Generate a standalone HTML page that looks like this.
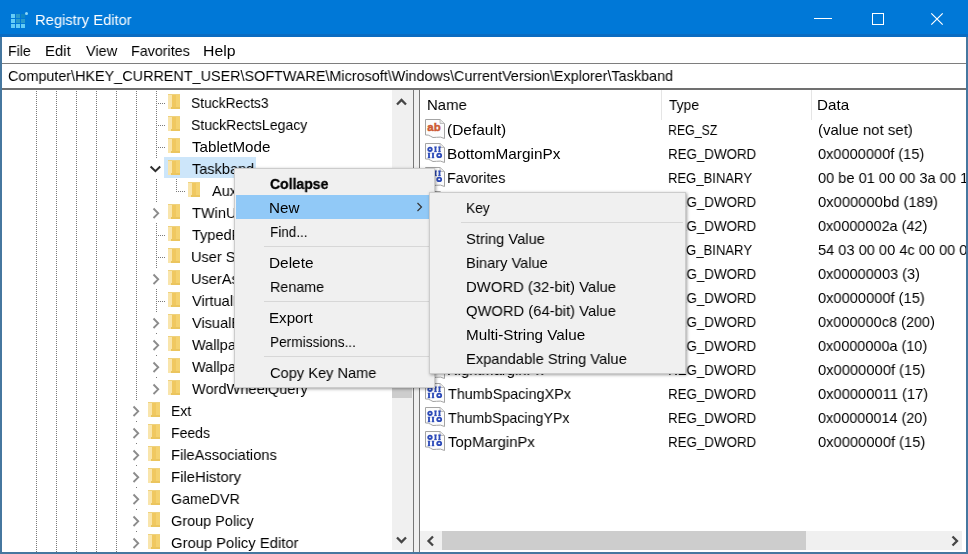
<!DOCTYPE html>
<html><head><meta charset="utf-8"><style>
html,body{margin:0;padding:0}
body{width:968px;height:554px;overflow:hidden;position:relative;background:#fff;font-family:"Liberation Sans",sans-serif;font-size:14px;color:#000}
.t{position:absolute;white-space:nowrap;transform-origin:0 0;will-change:transform}
.r{position:absolute}
svg.r{overflow:visible}
</style></head><body>
<div class="r" style="left:0px;top:0px;width:968px;height:37px;background:#0078D7;"></div><div class="r" style="left:0px;top:34px;width:968px;height:3px;background:#0A6CC2;"></div><div class="r" style="left:11px;top:14px;width:4px;height:4px;background:#64CCF6;"></div><div class="r" style="left:16px;top:14px;width:4px;height:4px;background:#2A9ACB;"></div><div class="r" style="left:21px;top:14px;width:4px;height:4px;background:#0F86C6;"></div><div class="r" style="left:11px;top:19px;width:4px;height:4px;background:#64CCF6;"></div><div class="r" style="left:16px;top:19px;width:4px;height:4px;background:#2A9ACB;"></div><div class="r" style="left:21px;top:19px;width:4px;height:4px;background:#2A9ACB;"></div><div class="r" style="left:11px;top:24px;width:4px;height:4px;background:#64CCF6;"></div><div class="r" style="left:16px;top:24px;width:4px;height:4px;background:#64CCF6;"></div><div class="r" style="left:21px;top:24px;width:4px;height:4px;background:#64CCF6;"></div><div class="r" style="left:25px;top:12px;width:3px;height:3px;background:#8ED8F8;border-radius:50%"></div><div class="t" style="left:34.72px;top:12.10px;font-size:15px;line-height:15px;transform:scaleX(0.9835);color:#fff">Registry Editor</div><div class="r" style="left:814px;top:18px;width:18px;height:1px;background:#fff;"></div><div class="r" style="left:872px;top:13px;width:10px;height:10px;border:1px solid #fff"></div><svg class="r" style="left:931px;top:13px" width="12" height="12"><path d="M0.3 0.3 L11.7 11.7 M11.7 0.3 L0.3 11.7" stroke="#fff" stroke-width="1.2"/></svg><div class="r" style="left:0px;top:37px;width:968px;height:26px;background:#fff;"></div><div class="t" style="left:7.66px;top:42.60px;font-size:15px;line-height:15px;transform:scaleX(0.9435);">File</div><div class="t" style="left:45.01px;top:42.60px;font-size:15px;line-height:15px;transform:scaleX(0.9920);">Edit</div><div class="t" style="left:85.80px;top:42.60px;font-size:15px;line-height:15px;transform:scaleX(0.9656);">View</div><div class="t" style="left:130.65px;top:42.60px;font-size:15px;line-height:15px;transform:scaleX(0.9533);">Favorites</div><div class="t" style="left:202.95px;top:42.60px;font-size:15px;line-height:15px;transform:scaleX(1.0517);">Help</div><div class="r" style="left:0px;top:63px;width:968px;height:1px;background:#7E7E7E;"></div><div class="r" style="left:0px;top:64px;width:968px;height:24px;background:#fff;"></div><div class="t" style="left:7.54px;top:67.90px;font-size:15px;line-height:15px;transform:scaleX(0.9585);">Computer\HKEY_CURRENT_USER\SOFTWARE\Microsoft\Windows\CurrentVersion\Explorer\Taskband</div><div class="r" style="left:0px;top:88px;width:968px;height:2px;background:#707070;"></div><div class="r" style="left:36px;top:91px;width:1px;height:461px;background:repeating-linear-gradient(to bottom,#7A7A7A 0 1px,transparent 1px 2px)"></div><div class="r" style="left:56px;top:91px;width:1px;height:461px;background:repeating-linear-gradient(to bottom,#7A7A7A 0 1px,transparent 1px 2px)"></div><div class="r" style="left:76px;top:91px;width:1px;height:461px;background:repeating-linear-gradient(to bottom,#7A7A7A 0 1px,transparent 1px 2px)"></div><div class="r" style="left:96px;top:91px;width:1px;height:461px;background:repeating-linear-gradient(to bottom,#7A7A7A 0 1px,transparent 1px 2px)"></div><div class="r" style="left:116px;top:91px;width:1px;height:461px;background:repeating-linear-gradient(to bottom,#7A7A7A 0 1px,transparent 1px 2px)"></div><div class="r" style="left:136px;top:91px;width:1px;height:461px;background:repeating-linear-gradient(to bottom,#7A7A7A 0 1px,transparent 1px 2px)"></div><div class="r" style="left:156px;top:91px;width:1px;height:298px;background:repeating-linear-gradient(to bottom,#7A7A7A 0 1px,transparent 1px 2px)"></div><div class="r" style="left:164px;top:157px;width:92px;height:21px;background:#CDE6FA;"></div><div class="r" style="left:156px;top:103px;width:10px;height:1px;background:repeating-linear-gradient(to right,#7A7A7A 0 1px,transparent 1px 2px)"></div><svg class="r" style="left:168px;top:94px" width="12" height="15" viewBox="0 0 12 15"><rect x="0" y="0" width="12" height="15" fill="#F5D880"/><rect x="0" y="1" width="4" height="14" fill="#F9E5AC"/><rect x="4" y="1" width="4" height="13" fill="#F0C860"/><rect x="8" y="1" width="4" height="13" fill="#F4D270"/><rect x="0" y="0" width="12" height="1" fill="#EFD27E"/><rect x="3" y="13" width="9" height="2" fill="#EBC55E"/></svg><div class="t" style="left:190.58px;top:94.90px;font-size:15px;line-height:15px;transform:scaleX(0.9217);">StuckRects3</div><div class="r" style="left:156px;top:125px;width:10px;height:1px;background:repeating-linear-gradient(to right,#7A7A7A 0 1px,transparent 1px 2px)"></div><svg class="r" style="left:168px;top:116px" width="12" height="15" viewBox="0 0 12 15"><rect x="0" y="0" width="12" height="15" fill="#F5D880"/><rect x="0" y="1" width="4" height="14" fill="#F9E5AC"/><rect x="4" y="1" width="4" height="13" fill="#F0C860"/><rect x="8" y="1" width="4" height="13" fill="#F4D270"/><rect x="0" y="0" width="12" height="1" fill="#EFD27E"/><rect x="3" y="13" width="9" height="2" fill="#EBC55E"/></svg><div class="t" style="left:190.56px;top:116.90px;font-size:15px;line-height:15px;transform:scaleX(0.9358);">StuckRectsLegacy</div><div class="r" style="left:156px;top:147px;width:10px;height:1px;background:repeating-linear-gradient(to right,#7A7A7A 0 1px,transparent 1px 2px)"></div><svg class="r" style="left:168px;top:138px" width="12" height="15" viewBox="0 0 12 15"><rect x="0" y="0" width="12" height="15" fill="#F5D880"/><rect x="0" y="1" width="4" height="14" fill="#F9E5AC"/><rect x="4" y="1" width="4" height="13" fill="#F0C860"/><rect x="8" y="1" width="4" height="13" fill="#F4D270"/><rect x="0" y="0" width="12" height="1" fill="#EFD27E"/><rect x="3" y="13" width="9" height="2" fill="#EBC55E"/></svg><div class="t" style="left:191.50px;top:138.90px;font-size:15px;line-height:15px;transform:scaleX(1.0104);">TabletMode</div><div class="r" style="left:151px;top:158px;width:10px;height:21px;background:#fff;"></div><svg class="r" style="left:150px;top:164px" width="12" height="9"><path d="M0.6 2.5 L5.4 7.2 L10.2 2.5" fill="none" stroke="#2E2E2E" stroke-width="2"/></svg><svg class="r" style="left:168px;top:160px" width="12" height="15" viewBox="0 0 12 15"><rect x="0" y="0" width="12" height="15" fill="#F5D880"/><rect x="0" y="1" width="4" height="14" fill="#F9E5AC"/><rect x="4" y="1" width="4" height="13" fill="#F0C860"/><rect x="8" y="1" width="4" height="13" fill="#F4D270"/><rect x="0" y="0" width="12" height="1" fill="#EFD27E"/><rect x="3" y="13" width="9" height="2" fill="#EBC55E"/></svg><div class="t" style="left:191.50px;top:160.90px;font-size:15px;line-height:15px;transform:scaleX(0.9700);">Taskband</div><div class="r" style="left:176px;top:191px;width:10px;height:1px;background:repeating-linear-gradient(to right,#7A7A7A 0 1px,transparent 1px 2px)"></div><div class="r" style="left:176px;top:179px;width:1px;height:12px;background:repeating-linear-gradient(to bottom,#7A7A7A 0 1px,transparent 1px 2px)"></div><div class="r" style="left:176px;top:191px;width:10px;height:1px;background:repeating-linear-gradient(to right,#7A7A7A 0 1px,transparent 1px 2px)"></div><svg class="r" style="left:188px;top:182px" width="12" height="15" viewBox="0 0 12 15"><rect x="0" y="0" width="12" height="15" fill="#F5D880"/><rect x="0" y="1" width="4" height="14" fill="#F9E5AC"/><rect x="4" y="1" width="4" height="13" fill="#F0C860"/><rect x="8" y="1" width="4" height="13" fill="#F4D270"/><rect x="0" y="0" width="12" height="1" fill="#EFD27E"/><rect x="3" y="13" width="9" height="2" fill="#EBC55E"/></svg><div class="t" style="left:211.50px;top:182.90px;font-size:15px;line-height:15px;transform:scaleX(0.9700);">AuxilliaryPins</div><div class="r" style="left:151px;top:202px;width:10px;height:21px;background:#fff;"></div><svg class="r" style="left:152px;top:206px" width="8" height="14"><path d="M1.5 2.5 L6.2 7.3 L1.5 12" fill="none" stroke="#8C8C8C" stroke-width="1.9"/></svg><svg class="r" style="left:168px;top:204px" width="12" height="15" viewBox="0 0 12 15"><rect x="0" y="0" width="12" height="15" fill="#F5D880"/><rect x="0" y="1" width="4" height="14" fill="#F9E5AC"/><rect x="4" y="1" width="4" height="13" fill="#F0C860"/><rect x="8" y="1" width="4" height="13" fill="#F4D270"/><rect x="0" y="0" width="12" height="1" fill="#EFD27E"/><rect x="3" y="13" width="9" height="2" fill="#EBC55E"/></svg><div class="t" style="left:191.50px;top:204.90px;font-size:15px;line-height:15px;transform:scaleX(0.9700);">TWinUI</div><div class="r" style="left:156px;top:235px;width:10px;height:1px;background:repeating-linear-gradient(to right,#7A7A7A 0 1px,transparent 1px 2px)"></div><svg class="r" style="left:168px;top:226px" width="12" height="15" viewBox="0 0 12 15"><rect x="0" y="0" width="12" height="15" fill="#F5D880"/><rect x="0" y="1" width="4" height="14" fill="#F9E5AC"/><rect x="4" y="1" width="4" height="13" fill="#F0C860"/><rect x="8" y="1" width="4" height="13" fill="#F4D270"/><rect x="0" y="0" width="12" height="1" fill="#EFD27E"/><rect x="3" y="13" width="9" height="2" fill="#EBC55E"/></svg><div class="t" style="left:191.50px;top:226.90px;font-size:15px;line-height:15px;transform:scaleX(0.9700);">TypedPaths</div><div class="r" style="left:156px;top:257px;width:10px;height:1px;background:repeating-linear-gradient(to right,#7A7A7A 0 1px,transparent 1px 2px)"></div><svg class="r" style="left:168px;top:248px" width="12" height="15" viewBox="0 0 12 15"><rect x="0" y="0" width="12" height="15" fill="#F5D880"/><rect x="0" y="1" width="4" height="14" fill="#F9E5AC"/><rect x="4" y="1" width="4" height="13" fill="#F0C860"/><rect x="8" y="1" width="4" height="13" fill="#F4D270"/><rect x="0" y="0" width="12" height="1" fill="#EFD27E"/><rect x="3" y="13" width="9" height="2" fill="#EBC55E"/></svg><div class="t" style="left:190.53px;top:248.90px;font-size:15px;line-height:15px;transform:scaleX(0.9700);">User Shell Folders</div><div class="r" style="left:151px;top:268px;width:10px;height:21px;background:#fff;"></div><svg class="r" style="left:152px;top:272px" width="8" height="14"><path d="M1.5 2.5 L6.2 7.3 L1.5 12" fill="none" stroke="#8C8C8C" stroke-width="1.9"/></svg><svg class="r" style="left:168px;top:270px" width="12" height="15" viewBox="0 0 12 15"><rect x="0" y="0" width="12" height="15" fill="#F5D880"/><rect x="0" y="1" width="4" height="14" fill="#F9E5AC"/><rect x="4" y="1" width="4" height="13" fill="#F0C860"/><rect x="8" y="1" width="4" height="13" fill="#F4D270"/><rect x="0" y="0" width="12" height="1" fill="#EFD27E"/><rect x="3" y="13" width="9" height="2" fill="#EBC55E"/></svg><div class="t" style="left:190.53px;top:270.90px;font-size:15px;line-height:15px;transform:scaleX(0.9700);">UserAssist</div><div class="r" style="left:156px;top:301px;width:10px;height:1px;background:repeating-linear-gradient(to right,#7A7A7A 0 1px,transparent 1px 2px)"></div><svg class="r" style="left:168px;top:292px" width="12" height="15" viewBox="0 0 12 15"><rect x="0" y="0" width="12" height="15" fill="#F5D880"/><rect x="0" y="1" width="4" height="14" fill="#F9E5AC"/><rect x="4" y="1" width="4" height="13" fill="#F0C860"/><rect x="8" y="1" width="4" height="13" fill="#F4D270"/><rect x="0" y="0" width="12" height="1" fill="#EFD27E"/><rect x="3" y="13" width="9" height="2" fill="#EBC55E"/></svg><div class="t" style="left:191.50px;top:292.90px;font-size:15px;line-height:15px;transform:scaleX(0.9700);">VirtualDesktops</div><div class="r" style="left:151px;top:312px;width:10px;height:21px;background:#fff;"></div><svg class="r" style="left:152px;top:316px" width="8" height="14"><path d="M1.5 2.5 L6.2 7.3 L1.5 12" fill="none" stroke="#8C8C8C" stroke-width="1.9"/></svg><svg class="r" style="left:168px;top:314px" width="12" height="15" viewBox="0 0 12 15"><rect x="0" y="0" width="12" height="15" fill="#F5D880"/><rect x="0" y="1" width="4" height="14" fill="#F9E5AC"/><rect x="4" y="1" width="4" height="13" fill="#F0C860"/><rect x="8" y="1" width="4" height="13" fill="#F4D270"/><rect x="0" y="0" width="12" height="1" fill="#EFD27E"/><rect x="3" y="13" width="9" height="2" fill="#EBC55E"/></svg><div class="t" style="left:191.50px;top:314.90px;font-size:15px;line-height:15px;transform:scaleX(0.9700);">VisualEffects</div><div class="r" style="left:151px;top:334px;width:10px;height:21px;background:#fff;"></div><svg class="r" style="left:152px;top:338px" width="8" height="14"><path d="M1.5 2.5 L6.2 7.3 L1.5 12" fill="none" stroke="#8C8C8C" stroke-width="1.9"/></svg><svg class="r" style="left:168px;top:336px" width="12" height="15" viewBox="0 0 12 15"><rect x="0" y="0" width="12" height="15" fill="#F5D880"/><rect x="0" y="1" width="4" height="14" fill="#F9E5AC"/><rect x="4" y="1" width="4" height="13" fill="#F0C860"/><rect x="8" y="1" width="4" height="13" fill="#F4D270"/><rect x="0" y="0" width="12" height="1" fill="#EFD27E"/><rect x="3" y="13" width="9" height="2" fill="#EBC55E"/></svg><div class="t" style="left:191.50px;top:336.90px;font-size:15px;line-height:15px;transform:scaleX(0.9700);">Wallpaper</div><div class="r" style="left:151px;top:356px;width:10px;height:21px;background:#fff;"></div><svg class="r" style="left:152px;top:360px" width="8" height="14"><path d="M1.5 2.5 L6.2 7.3 L1.5 12" fill="none" stroke="#8C8C8C" stroke-width="1.9"/></svg><svg class="r" style="left:168px;top:358px" width="12" height="15" viewBox="0 0 12 15"><rect x="0" y="0" width="12" height="15" fill="#F5D880"/><rect x="0" y="1" width="4" height="14" fill="#F9E5AC"/><rect x="4" y="1" width="4" height="13" fill="#F0C860"/><rect x="8" y="1" width="4" height="13" fill="#F4D270"/><rect x="0" y="0" width="12" height="1" fill="#EFD27E"/><rect x="3" y="13" width="9" height="2" fill="#EBC55E"/></svg><div class="t" style="left:191.50px;top:358.90px;font-size:15px;line-height:15px;transform:scaleX(0.9700);">Wallpapers</div><div class="r" style="left:151px;top:378px;width:10px;height:21px;background:#fff;"></div><svg class="r" style="left:152px;top:382px" width="8" height="14"><path d="M1.5 2.5 L6.2 7.3 L1.5 12" fill="none" stroke="#8C8C8C" stroke-width="1.9"/></svg><svg class="r" style="left:168px;top:380px" width="12" height="15" viewBox="0 0 12 15"><rect x="0" y="0" width="12" height="15" fill="#F5D880"/><rect x="0" y="1" width="4" height="14" fill="#F9E5AC"/><rect x="4" y="1" width="4" height="13" fill="#F0C860"/><rect x="8" y="1" width="4" height="13" fill="#F4D270"/><rect x="0" y="0" width="12" height="1" fill="#EFD27E"/><rect x="3" y="13" width="9" height="2" fill="#EBC55E"/></svg><div class="t" style="left:191.50px;top:380.90px;font-size:15px;line-height:15px;transform:scaleX(0.9723);">WordWheelQuery</div><div class="r" style="left:131px;top:400px;width:10px;height:21px;background:#fff;"></div><svg class="r" style="left:132px;top:404px" width="8" height="14"><path d="M1.5 2.5 L6.2 7.3 L1.5 12" fill="none" stroke="#8C8C8C" stroke-width="1.9"/></svg><svg class="r" style="left:148px;top:402px" width="12" height="15" viewBox="0 0 12 15"><rect x="0" y="0" width="12" height="15" fill="#F5D880"/><rect x="0" y="1" width="4" height="14" fill="#F9E5AC"/><rect x="4" y="1" width="4" height="13" fill="#F0C860"/><rect x="8" y="1" width="4" height="13" fill="#F4D270"/><rect x="0" y="0" width="12" height="1" fill="#EFD27E"/><rect x="3" y="13" width="9" height="2" fill="#EBC55E"/></svg><div class="t" style="left:170.57px;top:402.90px;font-size:15px;line-height:15px;transform:scaleX(0.9286);">Ext</div><div class="r" style="left:131px;top:422px;width:10px;height:21px;background:#fff;"></div><svg class="r" style="left:132px;top:426px" width="8" height="14"><path d="M1.5 2.5 L6.2 7.3 L1.5 12" fill="none" stroke="#8C8C8C" stroke-width="1.9"/></svg><svg class="r" style="left:148px;top:424px" width="12" height="15" viewBox="0 0 12 15"><rect x="0" y="0" width="12" height="15" fill="#F5D880"/><rect x="0" y="1" width="4" height="14" fill="#F9E5AC"/><rect x="4" y="1" width="4" height="13" fill="#F0C860"/><rect x="8" y="1" width="4" height="13" fill="#F4D270"/><rect x="0" y="0" width="12" height="1" fill="#EFD27E"/><rect x="3" y="13" width="9" height="2" fill="#EBC55E"/></svg><div class="t" style="left:170.56px;top:424.90px;font-size:15px;line-height:15px;transform:scaleX(0.9350);">Feeds</div><div class="r" style="left:131px;top:444px;width:10px;height:21px;background:#fff;"></div><svg class="r" style="left:132px;top:448px" width="8" height="14"><path d="M1.5 2.5 L6.2 7.3 L1.5 12" fill="none" stroke="#8C8C8C" stroke-width="1.9"/></svg><svg class="r" style="left:148px;top:446px" width="12" height="15" viewBox="0 0 12 15"><rect x="0" y="0" width="12" height="15" fill="#F5D880"/><rect x="0" y="1" width="4" height="14" fill="#F9E5AC"/><rect x="4" y="1" width="4" height="13" fill="#F0C860"/><rect x="8" y="1" width="4" height="13" fill="#F4D270"/><rect x="0" y="0" width="12" height="1" fill="#EFD27E"/><rect x="3" y="13" width="9" height="2" fill="#EBC55E"/></svg><div class="t" style="left:170.52px;top:446.90px;font-size:15px;line-height:15px;transform:scaleX(0.9757);">FileAssociations</div><div class="r" style="left:131px;top:466px;width:10px;height:21px;background:#fff;"></div><svg class="r" style="left:132px;top:470px" width="8" height="14"><path d="M1.5 2.5 L6.2 7.3 L1.5 12" fill="none" stroke="#8C8C8C" stroke-width="1.9"/></svg><svg class="r" style="left:148px;top:468px" width="12" height="15" viewBox="0 0 12 15"><rect x="0" y="0" width="12" height="15" fill="#F5D880"/><rect x="0" y="1" width="4" height="14" fill="#F9E5AC"/><rect x="4" y="1" width="4" height="13" fill="#F0C860"/><rect x="8" y="1" width="4" height="13" fill="#F4D270"/><rect x="0" y="0" width="12" height="1" fill="#EFD27E"/><rect x="3" y="13" width="9" height="2" fill="#EBC55E"/></svg><div class="t" style="left:170.51px;top:468.90px;font-size:15px;line-height:15px;transform:scaleX(0.9900);">FileHistory</div><div class="r" style="left:131px;top:488px;width:10px;height:21px;background:#fff;"></div><svg class="r" style="left:132px;top:492px" width="8" height="14"><path d="M1.5 2.5 L6.2 7.3 L1.5 12" fill="none" stroke="#8C8C8C" stroke-width="1.9"/></svg><svg class="r" style="left:148px;top:490px" width="12" height="15" viewBox="0 0 12 15"><rect x="0" y="0" width="12" height="15" fill="#F5D880"/><rect x="0" y="1" width="4" height="14" fill="#F9E5AC"/><rect x="4" y="1" width="4" height="13" fill="#F0C860"/><rect x="8" y="1" width="4" height="13" fill="#F4D270"/><rect x="0" y="0" width="12" height="1" fill="#EFD27E"/><rect x="3" y="13" width="9" height="2" fill="#EBC55E"/></svg><div class="t" style="left:170.55px;top:490.90px;font-size:15px;line-height:15px;transform:scaleX(0.9479);">GameDVR</div><div class="r" style="left:131px;top:510px;width:10px;height:21px;background:#fff;"></div><svg class="r" style="left:132px;top:514px" width="8" height="14"><path d="M1.5 2.5 L6.2 7.3 L1.5 12" fill="none" stroke="#8C8C8C" stroke-width="1.9"/></svg><svg class="r" style="left:148px;top:512px" width="12" height="15" viewBox="0 0 12 15"><rect x="0" y="0" width="12" height="15" fill="#F5D880"/><rect x="0" y="1" width="4" height="14" fill="#F9E5AC"/><rect x="4" y="1" width="4" height="13" fill="#F0C860"/><rect x="8" y="1" width="4" height="13" fill="#F4D270"/><rect x="0" y="0" width="12" height="1" fill="#EFD27E"/><rect x="3" y="13" width="9" height="2" fill="#EBC55E"/></svg><div class="t" style="left:170.54px;top:512.90px;font-size:15px;line-height:15px;transform:scaleX(0.9647);">Group Policy</div><div class="r" style="left:131px;top:532px;width:10px;height:21px;background:#fff;"></div><svg class="r" style="left:132px;top:536px" width="8" height="14"><path d="M1.5 2.5 L6.2 7.3 L1.5 12" fill="none" stroke="#8C8C8C" stroke-width="1.9"/></svg><svg class="r" style="left:148px;top:534px" width="12" height="15" viewBox="0 0 12 15"><rect x="0" y="0" width="12" height="15" fill="#F5D880"/><rect x="0" y="1" width="4" height="14" fill="#F9E5AC"/><rect x="4" y="1" width="4" height="13" fill="#F0C860"/><rect x="8" y="1" width="4" height="13" fill="#F4D270"/><rect x="0" y="0" width="12" height="1" fill="#EFD27E"/><rect x="3" y="13" width="9" height="2" fill="#EBC55E"/></svg><div class="t" style="left:170.51px;top:534.90px;font-size:15px;line-height:15px;transform:scaleX(0.9867);">Group Policy Editor</div><div class="r" style="left:392px;top:90px;width:20px;height:460px;background:#F0F0F0;"></div><div class="r" style="left:392px;top:250px;width:20px;height:148px;background:#CDCDCD;"></div><svg class="r" style="left:396px;top:98px" width="12" height="8"><path d="M1 6.5 L5.5 2 L10 6.5" fill="none" stroke="#464646" stroke-width="2.3"/></svg><svg class="r" style="left:396px;top:536px" width="12" height="8"><path d="M1 1.5 L5.5 6 L10 1.5" fill="none" stroke="#464646" stroke-width="2.3"/></svg><div class="r" style="left:412px;top:90px;width:8px;height:462px;background:#F0F0F0;"></div><div class="r" style="left:413px;top:90px;width:1px;height:462px;background:#777777;"></div><div class="r" style="left:419px;top:90px;width:1px;height:462px;background:#777777;"></div><div class="r" style="left:420px;top:90px;width:542px;height:462px;background:#fff;"></div><div class="r" style="left:661px;top:90px;width:1px;height:30px;background:#E5E5E5;"></div><div class="r" style="left:811px;top:90px;width:1px;height:30px;background:#E5E5E5;"></div><div class="t" style="left:426.51px;top:96.90px;font-size:15px;line-height:15px;transform:scaleX(0.9923);">Name</div><div class="t" style="left:669.10px;top:96.90px;font-size:15px;line-height:15px;transform:scaleX(0.9219);">Type</div><div class="t" style="left:817.39px;top:96.90px;font-size:15px;line-height:15px;transform:scaleX(1.0129);">Data</div><div class="r" style="left:420px;top:117px;width:546px;height:414px;overflow:hidden"><svg class="r" style="left:5px;top:2px" width="20" height="20" viewBox="0 0 20 20"><path d="M0.5 0.5 H15 L19.5 4.5 V19.5 Q15.5 17.3 11.5 18.3 Q7.5 19.3 5.5 17.2 Q3.5 15.6 0.5 16 Z" fill="#FCFCFC" stroke="#A4A4A4" stroke-width="1"/><path d="M15 0.5 V4.5 H19.5" fill="#E8E8E8" stroke="#B0B0B0" stroke-width="0.8"/><text x="2.3" y="12.4" font-family="Liberation Sans" font-weight="bold" font-size="11.5" fill="#CC5A32" stroke="#CC5A32" stroke-width="0.45">ab</text></svg><div class="t" style="left:26.67px;top:4.90px;font-size:15px;line-height:15px;transform:scaleX(1.0304);">(Default)</div><div class="t" style="left:248.18px;top:4.90px;font-size:15px;line-height:15px;transform:scaleX(0.8237);">REG_SZ</div><div class="t" style="left:397.50px;top:4.90px;font-size:15px;line-height:15px;transform:scaleX(0.9968);">(value not set)</div><svg class="r" style="left:5px;top:26px" width="20" height="20" viewBox="0 0 20 20"><path d="M0.5 0.5 H15 L19.5 4.5 V19.5 Q15.5 17.3 11.5 18.3 Q7.5 19.3 5.5 17.2 Q3.5 15.6 0.5 16 Z" fill="#FCFCFC" stroke="#A4A4A4" stroke-width="1"/><path d="M15 0.5 V4.5 H19.5" fill="#E8E8E8" stroke="#B0B0B0" stroke-width="0.8"/><g fill="none" stroke="#2C4AB8" stroke-width="1.8"><ellipse cx="5" cy="6.3" rx="1.8" ry="1.7"/><path d="M10.5 3.8 V8.8 M14.5 3.8 V8.8"/><path d="M4 9.9 V14.9 M8 9.9 V14.9"/><ellipse cx="14.2" cy="12.4" rx="2" ry="1.7"/></g><g fill="#2C4AB8"><rect x="9.2" y="3.6" width="2.6" height="0.9"/><rect x="9.2" y="8.2" width="2.6" height="0.9"/><rect x="13.2" y="3.6" width="2.6" height="0.9"/><rect x="13.2" y="8.2" width="2.6" height="0.9"/><rect x="2.7" y="9.7" width="2.6" height="0.9"/><rect x="2.7" y="14.3" width="2.6" height="0.9"/><rect x="6.7" y="9.7" width="2.6" height="0.9"/><rect x="6.7" y="14.3" width="2.6" height="0.9"/></g></svg><div class="t" style="left:26.68px;top:28.90px;font-size:15px;line-height:15px;transform:scaleX(1.0220);">BottomMarginPx</div><div class="t" style="left:248.11px;top:28.90px;font-size:15px;line-height:15px;transform:scaleX(0.8898);">REG_DWORD</div><div class="t" style="left:397.53px;top:28.90px;font-size:15px;line-height:15px;transform:scaleX(0.9729);">0x0000000f (15)</div><svg class="r" style="left:5px;top:50px" width="20" height="20" viewBox="0 0 20 20"><path d="M0.5 0.5 H15 L19.5 4.5 V19.5 Q15.5 17.3 11.5 18.3 Q7.5 19.3 5.5 17.2 Q3.5 15.6 0.5 16 Z" fill="#FCFCFC" stroke="#A4A4A4" stroke-width="1"/><path d="M15 0.5 V4.5 H19.5" fill="#E8E8E8" stroke="#B0B0B0" stroke-width="0.8"/><g fill="none" stroke="#2C4AB8" stroke-width="1.8"><ellipse cx="5" cy="6.3" rx="1.8" ry="1.7"/><path d="M10.5 3.8 V8.8 M14.5 3.8 V8.8"/><path d="M4 9.9 V14.9 M8 9.9 V14.9"/><ellipse cx="14.2" cy="12.4" rx="2" ry="1.7"/></g><g fill="#2C4AB8"><rect x="9.2" y="3.6" width="2.6" height="0.9"/><rect x="9.2" y="8.2" width="2.6" height="0.9"/><rect x="13.2" y="3.6" width="2.6" height="0.9"/><rect x="13.2" y="8.2" width="2.6" height="0.9"/><rect x="2.7" y="9.7" width="2.6" height="0.9"/><rect x="2.7" y="14.3" width="2.6" height="0.9"/><rect x="6.7" y="9.7" width="2.6" height="0.9"/><rect x="6.7" y="14.3" width="2.6" height="0.9"/></g></svg><div class="t" style="left:26.75px;top:52.90px;font-size:15px;line-height:15px;transform:scaleX(0.9450);">Favorites</div><div class="t" style="left:248.13px;top:52.90px;font-size:15px;line-height:15px;transform:scaleX(0.8716);">REG_BINARY</div><div class="t" style="left:397.53px;top:52.90px;font-size:15px;line-height:15px;transform:scaleX(0.9729);">00 be 01 00 00 3a 00 1e 00</div><svg class="r" style="left:5px;top:74px" width="20" height="20" viewBox="0 0 20 20"><path d="M0.5 0.5 H15 L19.5 4.5 V19.5 Q15.5 17.3 11.5 18.3 Q7.5 19.3 5.5 17.2 Q3.5 15.6 0.5 16 Z" fill="#FCFCFC" stroke="#A4A4A4" stroke-width="1"/><path d="M15 0.5 V4.5 H19.5" fill="#E8E8E8" stroke="#B0B0B0" stroke-width="0.8"/><g fill="none" stroke="#2C4AB8" stroke-width="1.8"><ellipse cx="5" cy="6.3" rx="1.8" ry="1.7"/><path d="M10.5 3.8 V8.8 M14.5 3.8 V8.8"/><path d="M4 9.9 V14.9 M8 9.9 V14.9"/><ellipse cx="14.2" cy="12.4" rx="2" ry="1.7"/></g><g fill="#2C4AB8"><rect x="9.2" y="3.6" width="2.6" height="0.9"/><rect x="9.2" y="8.2" width="2.6" height="0.9"/><rect x="13.2" y="3.6" width="2.6" height="0.9"/><rect x="13.2" y="8.2" width="2.6" height="0.9"/><rect x="2.7" y="9.7" width="2.6" height="0.9"/><rect x="2.7" y="14.3" width="2.6" height="0.9"/><rect x="6.7" y="9.7" width="2.6" height="0.9"/><rect x="6.7" y="14.3" width="2.6" height="0.9"/></g></svg><div class="t" style="left:26.66px;top:76.90px;font-size:15px;line-height:15px;transform:scaleX(1.0350);">FavoritesChanges</div><div class="t" style="left:248.11px;top:76.90px;font-size:15px;line-height:15px;transform:scaleX(0.8898);">REG_DWORD</div><div class="t" style="left:397.51px;top:76.90px;font-size:15px;line-height:15px;transform:scaleX(0.9850);">0x000000bd (189)</div><svg class="r" style="left:5px;top:98px" width="20" height="20" viewBox="0 0 20 20"><path d="M0.5 0.5 H15 L19.5 4.5 V19.5 Q15.5 17.3 11.5 18.3 Q7.5 19.3 5.5 17.2 Q3.5 15.6 0.5 16 Z" fill="#FCFCFC" stroke="#A4A4A4" stroke-width="1"/><path d="M15 0.5 V4.5 H19.5" fill="#E8E8E8" stroke="#B0B0B0" stroke-width="0.8"/><g fill="none" stroke="#2C4AB8" stroke-width="1.8"><ellipse cx="5" cy="6.3" rx="1.8" ry="1.7"/><path d="M10.5 3.8 V8.8 M14.5 3.8 V8.8"/><path d="M4 9.9 V14.9 M8 9.9 V14.9"/><ellipse cx="14.2" cy="12.4" rx="2" ry="1.7"/></g><g fill="#2C4AB8"><rect x="9.2" y="3.6" width="2.6" height="0.9"/><rect x="9.2" y="8.2" width="2.6" height="0.9"/><rect x="13.2" y="3.6" width="2.6" height="0.9"/><rect x="13.2" y="8.2" width="2.6" height="0.9"/><rect x="2.7" y="9.7" width="2.6" height="0.9"/><rect x="2.7" y="14.3" width="2.6" height="0.9"/><rect x="6.7" y="9.7" width="2.6" height="0.9"/><rect x="6.7" y="14.3" width="2.6" height="0.9"/></g></svg><div class="t" style="left:26.66px;top:100.90px;font-size:15px;line-height:15px;transform:scaleX(1.0350);">FavoritesRemovedChanges</div><div class="t" style="left:248.11px;top:100.90px;font-size:15px;line-height:15px;transform:scaleX(0.8898);">REG_DWORD</div><div class="t" style="left:397.54px;top:100.90px;font-size:15px;line-height:15px;transform:scaleX(0.9634);">0x0000002a (42)</div><svg class="r" style="left:5px;top:122px" width="20" height="20" viewBox="0 0 20 20"><path d="M0.5 0.5 H15 L19.5 4.5 V19.5 Q15.5 17.3 11.5 18.3 Q7.5 19.3 5.5 17.2 Q3.5 15.6 0.5 16 Z" fill="#FCFCFC" stroke="#A4A4A4" stroke-width="1"/><path d="M15 0.5 V4.5 H19.5" fill="#E8E8E8" stroke="#B0B0B0" stroke-width="0.8"/><g fill="none" stroke="#2C4AB8" stroke-width="1.8"><ellipse cx="5" cy="6.3" rx="1.8" ry="1.7"/><path d="M10.5 3.8 V8.8 M14.5 3.8 V8.8"/><path d="M4 9.9 V14.9 M8 9.9 V14.9"/><ellipse cx="14.2" cy="12.4" rx="2" ry="1.7"/></g><g fill="#2C4AB8"><rect x="9.2" y="3.6" width="2.6" height="0.9"/><rect x="9.2" y="8.2" width="2.6" height="0.9"/><rect x="13.2" y="3.6" width="2.6" height="0.9"/><rect x="13.2" y="8.2" width="2.6" height="0.9"/><rect x="2.7" y="9.7" width="2.6" height="0.9"/><rect x="2.7" y="14.3" width="2.6" height="0.9"/><rect x="6.7" y="9.7" width="2.6" height="0.9"/><rect x="6.7" y="14.3" width="2.6" height="0.9"/></g></svg><div class="t" style="left:26.66px;top:124.90px;font-size:15px;line-height:15px;transform:scaleX(1.0350);">FavoritesResolve</div><div class="t" style="left:248.13px;top:124.90px;font-size:15px;line-height:15px;transform:scaleX(0.8716);">REG_BINARY</div><div class="t" style="left:397.53px;top:124.90px;font-size:15px;line-height:15px;transform:scaleX(0.9741);">54 03 00 00 4c 00 00 00 01</div><svg class="r" style="left:5px;top:146px" width="20" height="20" viewBox="0 0 20 20"><path d="M0.5 0.5 H15 L19.5 4.5 V19.5 Q15.5 17.3 11.5 18.3 Q7.5 19.3 5.5 17.2 Q3.5 15.6 0.5 16 Z" fill="#FCFCFC" stroke="#A4A4A4" stroke-width="1"/><path d="M15 0.5 V4.5 H19.5" fill="#E8E8E8" stroke="#B0B0B0" stroke-width="0.8"/><g fill="none" stroke="#2C4AB8" stroke-width="1.8"><ellipse cx="5" cy="6.3" rx="1.8" ry="1.7"/><path d="M10.5 3.8 V8.8 M14.5 3.8 V8.8"/><path d="M4 9.9 V14.9 M8 9.9 V14.9"/><ellipse cx="14.2" cy="12.4" rx="2" ry="1.7"/></g><g fill="#2C4AB8"><rect x="9.2" y="3.6" width="2.6" height="0.9"/><rect x="9.2" y="8.2" width="2.6" height="0.9"/><rect x="13.2" y="3.6" width="2.6" height="0.9"/><rect x="13.2" y="8.2" width="2.6" height="0.9"/><rect x="2.7" y="9.7" width="2.6" height="0.9"/><rect x="2.7" y="14.3" width="2.6" height="0.9"/><rect x="6.7" y="9.7" width="2.6" height="0.9"/><rect x="6.7" y="14.3" width="2.6" height="0.9"/></g></svg><div class="t" style="left:26.66px;top:148.90px;font-size:15px;line-height:15px;transform:scaleX(1.0350);">FavoritesVersion</div><div class="t" style="left:248.11px;top:148.90px;font-size:15px;line-height:15px;transform:scaleX(0.8898);">REG_DWORD</div><div class="t" style="left:397.53px;top:148.90px;font-size:15px;line-height:15px;transform:scaleX(0.9699);">0x00000003 (3)</div><svg class="r" style="left:5px;top:170px" width="20" height="20" viewBox="0 0 20 20"><path d="M0.5 0.5 H15 L19.5 4.5 V19.5 Q15.5 17.3 11.5 18.3 Q7.5 19.3 5.5 17.2 Q3.5 15.6 0.5 16 Z" fill="#FCFCFC" stroke="#A4A4A4" stroke-width="1"/><path d="M15 0.5 V4.5 H19.5" fill="#E8E8E8" stroke="#B0B0B0" stroke-width="0.8"/><g fill="none" stroke="#2C4AB8" stroke-width="1.8"><ellipse cx="5" cy="6.3" rx="1.8" ry="1.7"/><path d="M10.5 3.8 V8.8 M14.5 3.8 V8.8"/><path d="M4 9.9 V14.9 M8 9.9 V14.9"/><ellipse cx="14.2" cy="12.4" rx="2" ry="1.7"/></g><g fill="#2C4AB8"><rect x="9.2" y="3.6" width="2.6" height="0.9"/><rect x="9.2" y="8.2" width="2.6" height="0.9"/><rect x="13.2" y="3.6" width="2.6" height="0.9"/><rect x="13.2" y="8.2" width="2.6" height="0.9"/><rect x="2.7" y="9.7" width="2.6" height="0.9"/><rect x="2.7" y="14.3" width="2.6" height="0.9"/><rect x="6.7" y="9.7" width="2.6" height="0.9"/><rect x="6.7" y="14.3" width="2.6" height="0.9"/></g></svg><div class="t" style="left:26.66px;top:172.90px;font-size:15px;line-height:15px;transform:scaleX(1.0350);">LeftMarginPx</div><div class="t" style="left:248.11px;top:172.90px;font-size:15px;line-height:15px;transform:scaleX(0.8898);">REG_DWORD</div><div class="t" style="left:397.52px;top:172.90px;font-size:15px;line-height:15px;transform:scaleX(0.9766);">0x0000000f (15)</div><svg class="r" style="left:5px;top:194px" width="20" height="20" viewBox="0 0 20 20"><path d="M0.5 0.5 H15 L19.5 4.5 V19.5 Q15.5 17.3 11.5 18.3 Q7.5 19.3 5.5 17.2 Q3.5 15.6 0.5 16 Z" fill="#FCFCFC" stroke="#A4A4A4" stroke-width="1"/><path d="M15 0.5 V4.5 H19.5" fill="#E8E8E8" stroke="#B0B0B0" stroke-width="0.8"/><g fill="none" stroke="#2C4AB8" stroke-width="1.8"><ellipse cx="5" cy="6.3" rx="1.8" ry="1.7"/><path d="M10.5 3.8 V8.8 M14.5 3.8 V8.8"/><path d="M4 9.9 V14.9 M8 9.9 V14.9"/><ellipse cx="14.2" cy="12.4" rx="2" ry="1.7"/></g><g fill="#2C4AB8"><rect x="9.2" y="3.6" width="2.6" height="0.9"/><rect x="9.2" y="8.2" width="2.6" height="0.9"/><rect x="13.2" y="3.6" width="2.6" height="0.9"/><rect x="13.2" y="8.2" width="2.6" height="0.9"/><rect x="2.7" y="9.7" width="2.6" height="0.9"/><rect x="2.7" y="14.3" width="2.6" height="0.9"/><rect x="6.7" y="9.7" width="2.6" height="0.9"/><rect x="6.7" y="14.3" width="2.6" height="0.9"/></g></svg><div class="t" style="left:26.66px;top:196.90px;font-size:15px;line-height:15px;transform:scaleX(1.0350);">MinThumbSizePx</div><div class="t" style="left:248.11px;top:196.90px;font-size:15px;line-height:15px;transform:scaleX(0.8898);">REG_DWORD</div><div class="t" style="left:397.53px;top:196.90px;font-size:15px;line-height:15px;transform:scaleX(0.9664);">0x000000c8 (200)</div><svg class="r" style="left:5px;top:218px" width="20" height="20" viewBox="0 0 20 20"><path d="M0.5 0.5 H15 L19.5 4.5 V19.5 Q15.5 17.3 11.5 18.3 Q7.5 19.3 5.5 17.2 Q3.5 15.6 0.5 16 Z" fill="#FCFCFC" stroke="#A4A4A4" stroke-width="1"/><path d="M15 0.5 V4.5 H19.5" fill="#E8E8E8" stroke="#B0B0B0" stroke-width="0.8"/><g fill="none" stroke="#2C4AB8" stroke-width="1.8"><ellipse cx="5" cy="6.3" rx="1.8" ry="1.7"/><path d="M10.5 3.8 V8.8 M14.5 3.8 V8.8"/><path d="M4 9.9 V14.9 M8 9.9 V14.9"/><ellipse cx="14.2" cy="12.4" rx="2" ry="1.7"/></g><g fill="#2C4AB8"><rect x="9.2" y="3.6" width="2.6" height="0.9"/><rect x="9.2" y="8.2" width="2.6" height="0.9"/><rect x="13.2" y="3.6" width="2.6" height="0.9"/><rect x="13.2" y="8.2" width="2.6" height="0.9"/><rect x="2.7" y="9.7" width="2.6" height="0.9"/><rect x="2.7" y="14.3" width="2.6" height="0.9"/><rect x="6.7" y="9.7" width="2.6" height="0.9"/><rect x="6.7" y="14.3" width="2.6" height="0.9"/></g></svg><div class="t" style="left:26.66px;top:220.90px;font-size:15px;line-height:15px;transform:scaleX(1.0350);">NumThumbnails</div><div class="t" style="left:248.11px;top:220.90px;font-size:15px;line-height:15px;transform:scaleX(0.8898);">REG_DWORD</div><div class="t" style="left:397.54px;top:220.90px;font-size:15px;line-height:15px;transform:scaleX(0.9625);">0x0000000a (10)</div><svg class="r" style="left:5px;top:242px" width="20" height="20" viewBox="0 0 20 20"><path d="M0.5 0.5 H15 L19.5 4.5 V19.5 Q15.5 17.3 11.5 18.3 Q7.5 19.3 5.5 17.2 Q3.5 15.6 0.5 16 Z" fill="#FCFCFC" stroke="#A4A4A4" stroke-width="1"/><path d="M15 0.5 V4.5 H19.5" fill="#E8E8E8" stroke="#B0B0B0" stroke-width="0.8"/><g fill="none" stroke="#2C4AB8" stroke-width="1.8"><ellipse cx="5" cy="6.3" rx="1.8" ry="1.7"/><path d="M10.5 3.8 V8.8 M14.5 3.8 V8.8"/><path d="M4 9.9 V14.9 M8 9.9 V14.9"/><ellipse cx="14.2" cy="12.4" rx="2" ry="1.7"/></g><g fill="#2C4AB8"><rect x="9.2" y="3.6" width="2.6" height="0.9"/><rect x="9.2" y="8.2" width="2.6" height="0.9"/><rect x="13.2" y="3.6" width="2.6" height="0.9"/><rect x="13.2" y="8.2" width="2.6" height="0.9"/><rect x="2.7" y="9.7" width="2.6" height="0.9"/><rect x="2.7" y="14.3" width="2.6" height="0.9"/><rect x="6.7" y="9.7" width="2.6" height="0.9"/><rect x="6.7" y="14.3" width="2.6" height="0.9"/></g></svg><div class="t" style="left:26.72px;top:244.90px;font-size:15px;line-height:15px;transform:scaleX(0.9825);">RightMarginPx</div><div class="t" style="left:248.11px;top:244.90px;font-size:15px;line-height:15px;transform:scaleX(0.8898);">REG_DWORD</div><div class="t" style="left:397.52px;top:244.90px;font-size:15px;line-height:15px;transform:scaleX(0.9822);">0x0000000f (15)</div><svg class="r" style="left:5px;top:266px" width="20" height="20" viewBox="0 0 20 20"><path d="M0.5 0.5 H15 L19.5 4.5 V19.5 Q15.5 17.3 11.5 18.3 Q7.5 19.3 5.5 17.2 Q3.5 15.6 0.5 16 Z" fill="#FCFCFC" stroke="#A4A4A4" stroke-width="1"/><path d="M15 0.5 V4.5 H19.5" fill="#E8E8E8" stroke="#B0B0B0" stroke-width="0.8"/><g fill="none" stroke="#2C4AB8" stroke-width="1.8"><ellipse cx="5" cy="6.3" rx="1.8" ry="1.7"/><path d="M10.5 3.8 V8.8 M14.5 3.8 V8.8"/><path d="M4 9.9 V14.9 M8 9.9 V14.9"/><ellipse cx="14.2" cy="12.4" rx="2" ry="1.7"/></g><g fill="#2C4AB8"><rect x="9.2" y="3.6" width="2.6" height="0.9"/><rect x="9.2" y="8.2" width="2.6" height="0.9"/><rect x="13.2" y="3.6" width="2.6" height="0.9"/><rect x="13.2" y="8.2" width="2.6" height="0.9"/><rect x="2.7" y="9.7" width="2.6" height="0.9"/><rect x="2.7" y="14.3" width="2.6" height="0.9"/><rect x="6.7" y="9.7" width="2.6" height="0.9"/><rect x="6.7" y="14.3" width="2.6" height="0.9"/></g></svg><div class="t" style="left:27.70px;top:268.90px;font-size:15px;line-height:15px;transform:scaleX(0.9570);">ThumbSpacingXPx</div><div class="t" style="left:248.11px;top:268.90px;font-size:15px;line-height:15px;transform:scaleX(0.8898);">REG_DWORD</div><div class="t" style="left:397.52px;top:268.90px;font-size:15px;line-height:15px;transform:scaleX(0.9800);">0x00000011 (17)</div><svg class="r" style="left:5px;top:290px" width="20" height="20" viewBox="0 0 20 20"><path d="M0.5 0.5 H15 L19.5 4.5 V19.5 Q15.5 17.3 11.5 18.3 Q7.5 19.3 5.5 17.2 Q3.5 15.6 0.5 16 Z" fill="#FCFCFC" stroke="#A4A4A4" stroke-width="1"/><path d="M15 0.5 V4.5 H19.5" fill="#E8E8E8" stroke="#B0B0B0" stroke-width="0.8"/><g fill="none" stroke="#2C4AB8" stroke-width="1.8"><ellipse cx="5" cy="6.3" rx="1.8" ry="1.7"/><path d="M10.5 3.8 V8.8 M14.5 3.8 V8.8"/><path d="M4 9.9 V14.9 M8 9.9 V14.9"/><ellipse cx="14.2" cy="12.4" rx="2" ry="1.7"/></g><g fill="#2C4AB8"><rect x="9.2" y="3.6" width="2.6" height="0.9"/><rect x="9.2" y="8.2" width="2.6" height="0.9"/><rect x="13.2" y="3.6" width="2.6" height="0.9"/><rect x="13.2" y="8.2" width="2.6" height="0.9"/><rect x="2.7" y="9.7" width="2.6" height="0.9"/><rect x="2.7" y="14.3" width="2.6" height="0.9"/><rect x="6.7" y="9.7" width="2.6" height="0.9"/><rect x="6.7" y="14.3" width="2.6" height="0.9"/></g></svg><div class="t" style="left:27.70px;top:292.90px;font-size:15px;line-height:15px;transform:scaleX(0.9453);">ThumbSpacingYPx</div><div class="t" style="left:248.11px;top:292.90px;font-size:15px;line-height:15px;transform:scaleX(0.8898);">REG_DWORD</div><div class="t" style="left:397.54px;top:292.90px;font-size:15px;line-height:15px;transform:scaleX(0.9625);">0x00000014 (20)</div><svg class="r" style="left:5px;top:314px" width="20" height="20" viewBox="0 0 20 20"><path d="M0.5 0.5 H15 L19.5 4.5 V19.5 Q15.5 17.3 11.5 18.3 Q7.5 19.3 5.5 17.2 Q3.5 15.6 0.5 16 Z" fill="#FCFCFC" stroke="#A4A4A4" stroke-width="1"/><path d="M15 0.5 V4.5 H19.5" fill="#E8E8E8" stroke="#B0B0B0" stroke-width="0.8"/><g fill="none" stroke="#2C4AB8" stroke-width="1.8"><ellipse cx="5" cy="6.3" rx="1.8" ry="1.7"/><path d="M10.5 3.8 V8.8 M14.5 3.8 V8.8"/><path d="M4 9.9 V14.9 M8 9.9 V14.9"/><ellipse cx="14.2" cy="12.4" rx="2" ry="1.7"/></g><g fill="#2C4AB8"><rect x="9.2" y="3.6" width="2.6" height="0.9"/><rect x="9.2" y="8.2" width="2.6" height="0.9"/><rect x="13.2" y="3.6" width="2.6" height="0.9"/><rect x="13.2" y="8.2" width="2.6" height="0.9"/><rect x="2.7" y="9.7" width="2.6" height="0.9"/><rect x="2.7" y="14.3" width="2.6" height="0.9"/><rect x="6.7" y="9.7" width="2.6" height="0.9"/><rect x="6.7" y="14.3" width="2.6" height="0.9"/></g></svg><div class="t" style="left:27.70px;top:316.90px;font-size:15px;line-height:15px;transform:scaleX(0.9920);">TopMarginPx</div><div class="t" style="left:248.11px;top:316.90px;font-size:15px;line-height:15px;transform:scaleX(0.8898);">REG_DWORD</div><div class="t" style="left:397.52px;top:316.90px;font-size:15px;line-height:15px;transform:scaleX(0.9822);">0x0000000f (15)</div></div><div class="r" style="left:420px;top:531px;width:542px;height:19px;background:#F0F0F0;"></div><div class="r" style="left:442px;top:531px;width:364px;height:19px;background:#CDCDCD;"></div><svg class="r" style="left:427px;top:535px" width="8" height="12"><path d="M6 1.5 L1.5 6 L6 10.5" fill="none" stroke="#464646" stroke-width="2.3"/></svg><svg class="r" style="left:951px;top:535px" width="8" height="12"><path d="M1.5 1.5 L6 6 L1.5 10.5" fill="none" stroke="#464646" stroke-width="2.3"/></svg><div class="r" style="left:234px;top:168px;width:199px;height:218px;background:#F0F0F0;border:1px solid #CCCCCC;box-shadow:1px 1px 3px rgba(0,0,0,0.38)"></div><div class="r" style="left:236px;top:195px;width:196px;height:24px;background:#91C9F7;"></div><div class="t" style="left:269.57px;top:175.90px;font-size:15px;line-height:15px;font-weight:bold;transform:scaleX(0.9328);-webkit-text-stroke:0.3px #000">Collapse</div><div class="t" style="left:269.49px;top:199.90px;font-size:15px;line-height:15px;transform:scaleX(1.0138);">New</div><svg class="r" style="left:416px;top:202px" width="8" height="11"><path d="M1.5 1 L5.5 5 L1.5 9" fill="none" stroke="#333" stroke-width="1.2"/></svg><div class="t" style="left:269.60px;top:223.90px;font-size:15px;line-height:15px;transform:scaleX(0.9025);">Find...</div><div class="r" style="left:264px;top:246px;width:168px;height:1px;background:#D7D7D7;"></div><div class="t" style="left:269.47px;top:254.90px;font-size:15px;line-height:15px;transform:scaleX(1.0262);">Delete</div><div class="t" style="left:269.75px;top:278.90px;font-size:15px;line-height:15px;transform:scaleX(0.9545);">Rename</div><div class="r" style="left:264px;top:301px;width:168px;height:1px;background:#D7D7D7;"></div><div class="t" style="left:269.49px;top:309.90px;font-size:15px;line-height:15px;transform:scaleX(1.0095);">Export</div><div class="t" style="left:269.59px;top:333.90px;font-size:15px;line-height:15px;transform:scaleX(0.9120);">Permissions...</div><div class="r" style="left:264px;top:356px;width:168px;height:1px;background:#D7D7D7;"></div><div class="t" style="left:269.52px;top:364.90px;font-size:15px;line-height:15px;transform:scaleX(0.9750);">Copy Key Name</div><div class="r" style="left:429px;top:192px;width:255px;height:180px;background:#F0F0F0;border:1px solid #CCCCCC;box-shadow:1px 1px 3px rgba(0,0,0,0.38)"></div><div class="t" style="left:466.08px;top:199.90px;font-size:15px;line-height:15px;transform:scaleX(0.9200);">Key</div><div class="r" style="left:461px;top:222px;width:222px;height:1px;background:#D7D7D7;"></div><div class="t" style="left:466.02px;top:230.90px;font-size:15px;line-height:15px;transform:scaleX(0.9785);">String Value</div><div class="t" style="left:466.03px;top:254.90px;font-size:15px;line-height:15px;transform:scaleX(0.9744);">Binary Value</div><div class="t" style="left:466.01px;top:278.90px;font-size:15px;line-height:15px;transform:scaleX(0.9907);">DWORD (32-bit) Value</div><div class="t" style="left:466.02px;top:302.90px;font-size:15px;line-height:15px;transform:scaleX(0.9841);">QWORD (64-bit) Value</div><div class="t" style="left:465.98px;top:326.90px;font-size:15px;line-height:15px;transform:scaleX(1.0164);">Multi-String Value</div><div class="t" style="left:466.02px;top:350.90px;font-size:15px;line-height:15px;transform:scaleX(0.9804);">Expandable String Value</div><div class="r" style="left:0px;top:37px;width:2px;height:517px;background:#46779F;"></div><div class="r" style="left:966px;top:37px;width:2px;height:517px;background:#46779F;"></div><div class="r" style="left:0px;top:552px;width:968px;height:2px;background:#46779F;"></div>
</body></html>
